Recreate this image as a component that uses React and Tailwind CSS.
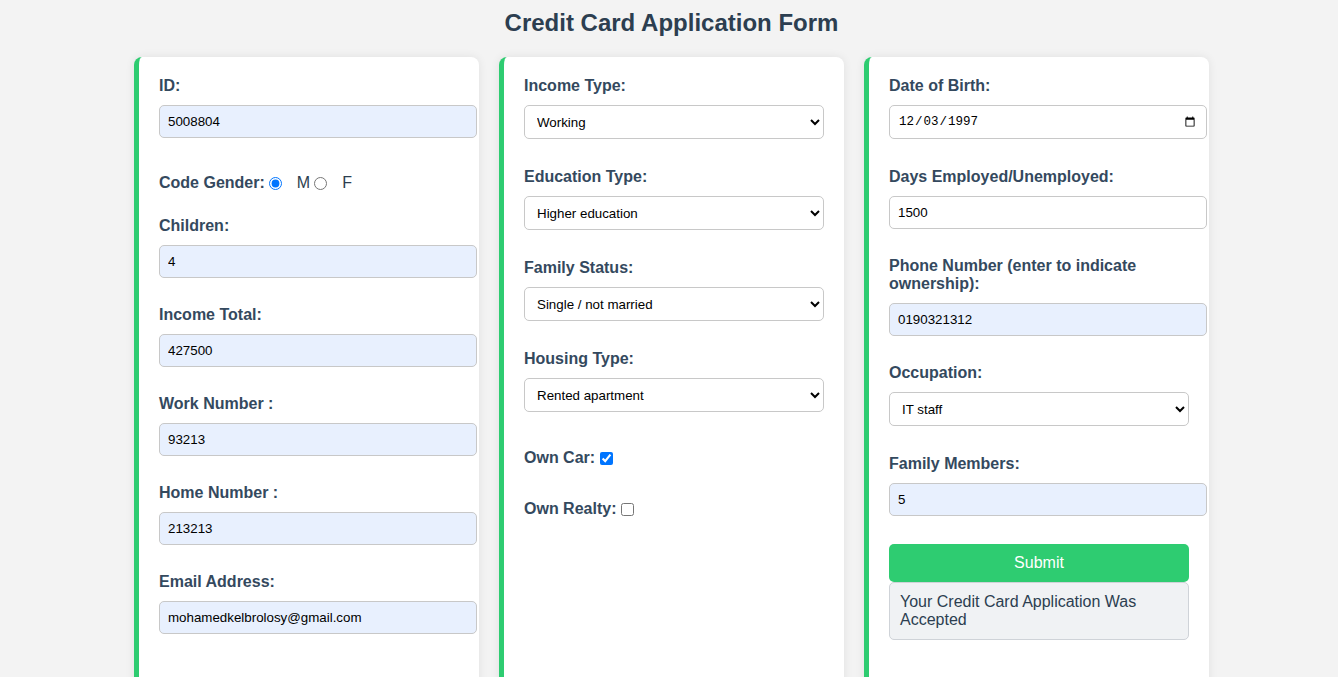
import React from "react";

const labelCls = "block text-[16px] leading-[18px] font-bold text-[#34495e]";
const inputCls =
  "block w-[318px] h-[33px] px-2 text-[13.33px] text-black border border-[#c8c8c8] rounded-[5px] outline-none";
const selectCls =
  "block w-[300px] h-[34px] pl-2 pr-1 text-[13.33px] text-black bg-white border border-[#c8c8c8] rounded-[5px] outline-none";

const Field = ({ label, value, filled = true, className = "" }) => (
  <div className={className}>
    <label className={labelCls}>{label}</label>
    <input
      type="text"
      defaultValue={value}
      className={`${inputCls} mt-[10px] ${filled ? "bg-[#e8f0fe]" : "bg-white"}`}
    />
  </div>
);

const SelectField = ({ label, value, options, className = "" }) => (
  <div className={className}>
    <label className={labelCls}>{label}</label>
    <select defaultValue={value} className={`${selectCls} mt-[10px]`}>
      {options.map((o) => (
        <option key={o} value={o}>
          {o}
        </option>
      ))}
    </select>
  </div>
);

const Card = ({ children }) => (
  <div className="w-[345px] bg-white rounded-lg border-l-[5px] border-[#2ecc71] shadow-[0_0_10px_rgba(0,0,0,0.08)] pl-5 pr-5 pt-5 pb-[60px]">
    {children}
  </div>
);

export default function App() {
  return (
    <div
      className="min-h-screen bg-[#f3f3f3] pl-[5px] pt-[9px]"
      style={{ fontFamily: '"Liberation Sans", Arial, sans-serif' }}
    >
      <h2 className="text-center text-[24px] leading-[28px] font-bold text-[#2c3e50]">
        Credit Card Application Form
      </h2>

      <div className="flex justify-center gap-5 mt-5">
        {/* Left column */}
        <Card>
          <Field label="ID:" value="5008804" />
          <div className="flex items-center h-[18px] mt-[36px] text-[16px]">
            <span className="font-bold text-[#34495e]">Code Gender:</span>
            <input type="radio" name="gender" defaultChecked className="w-[13px] h-[13px] m-0 ml-[4px]" />
            <span className="ml-[15px] text-[#2c3e50]">M</span>
            <input type="radio" name="gender" className="w-[13px] h-[13px] m-0 ml-[4px]" />
            <span className="ml-[15px] text-[#2c3e50]">F</span>
          </div>
          <Field label="Children:" value="4" className="mt-[25px]" />
          <Field label="Income Total:" value="427500" className="mt-[28px]" />
          <Field label="Work Number :" value="93213" className="mt-[28px]" />
          <Field label="Home Number :" value="213213" className="mt-[28px]" />
          <Field label="Email Address:" value="mohamedkelbrolosy@gmail.com" className="mt-[28px]" />
        </Card>

        {/* Middle column */}
        <Card>
          <SelectField
            label="Income Type:"
            value="Working"
            options={["Working", "Commercial associate", "Pensioner", "State servant", "Student"]}
          />
          <SelectField
            label="Education Type:"
            value="Higher education"
            options={["Higher education", "Secondary / secondary special", "Incomplete higher", "Lower secondary", "Academic degree"]}
            className="mt-[29px]"
          />
          <SelectField
            label="Family Status:"
            value="Single / not married"
            options={["Single / not married", "Married", "Civil marriage", "Separated", "Widow"]}
            className="mt-[29px]"
          />
          <SelectField
            label="Housing Type:"
            value="Rented apartment"
            options={["Rented apartment", "House / apartment", "With parents", "Municipal apartment", "Office apartment", "Co-op apartment"]}
            className="mt-[29px]"
          />
          <div className="flex items-center h-[18px] mt-[37px]">
            <span className={labelCls}>Own Car:</span>
            <input type="checkbox" defaultChecked className="w-[13px] h-[13px] m-0 ml-[5px]" />
          </div>
          <div className="flex items-center h-[18px] mt-[33px]">
            <span className={labelCls}>Own Realty:</span>
            <input type="checkbox" className="w-[13px] h-[13px] m-0 ml-[5px]" />
          </div>
        </Card>

        {/* Right column */}
        <Card>
          <div>
            <label className={labelCls}>Date of Birth:</label>
            <input
              type="date"
              defaultValue="1997-12-03"
              className="block w-[318px] h-[34px] mt-[10px] px-2 text-[12.5px] text-black bg-white border border-[#c8c8c8] rounded-[5px] outline-none"
              style={{ fontFamily: '"Liberation Mono", monospace' }}
            />
          </div>
          <Field label="Days Employed/Unemployed:" value="1500" filled={false} className="mt-[29px]" />
          <Field
            label="Phone Number (enter to indicate ownership):"
            value="0190321312"
            className="mt-[28px]"
          />
          <SelectField
            label="Occupation:"
            value="IT staff"
            options={["IT staff", "Laborers", "Core staff", "Sales staff", "Managers", "Drivers", "Accountants"]}
            className="mt-[28px]"
          />
          <Field label="Family Members:" value="5" className="mt-[29px]" />
          <button
            type="button"
            className="block w-[300px] h-[38px] mt-[28px] bg-[#2ecc71] text-white text-[16px] rounded-[5px]"
          >
            Submit
          </button>
          <div className="w-[300px] px-[10px] pt-[10px] pb-[10px] bg-[#f0f2f4] border border-[#cfd3d8] rounded-[5px] text-[16px] leading-[18px] text-[#2c3e50]">
            Your Credit Card Application Was Accepted
          </div>
        </Card>
      </div>
    </div>
  );
}
